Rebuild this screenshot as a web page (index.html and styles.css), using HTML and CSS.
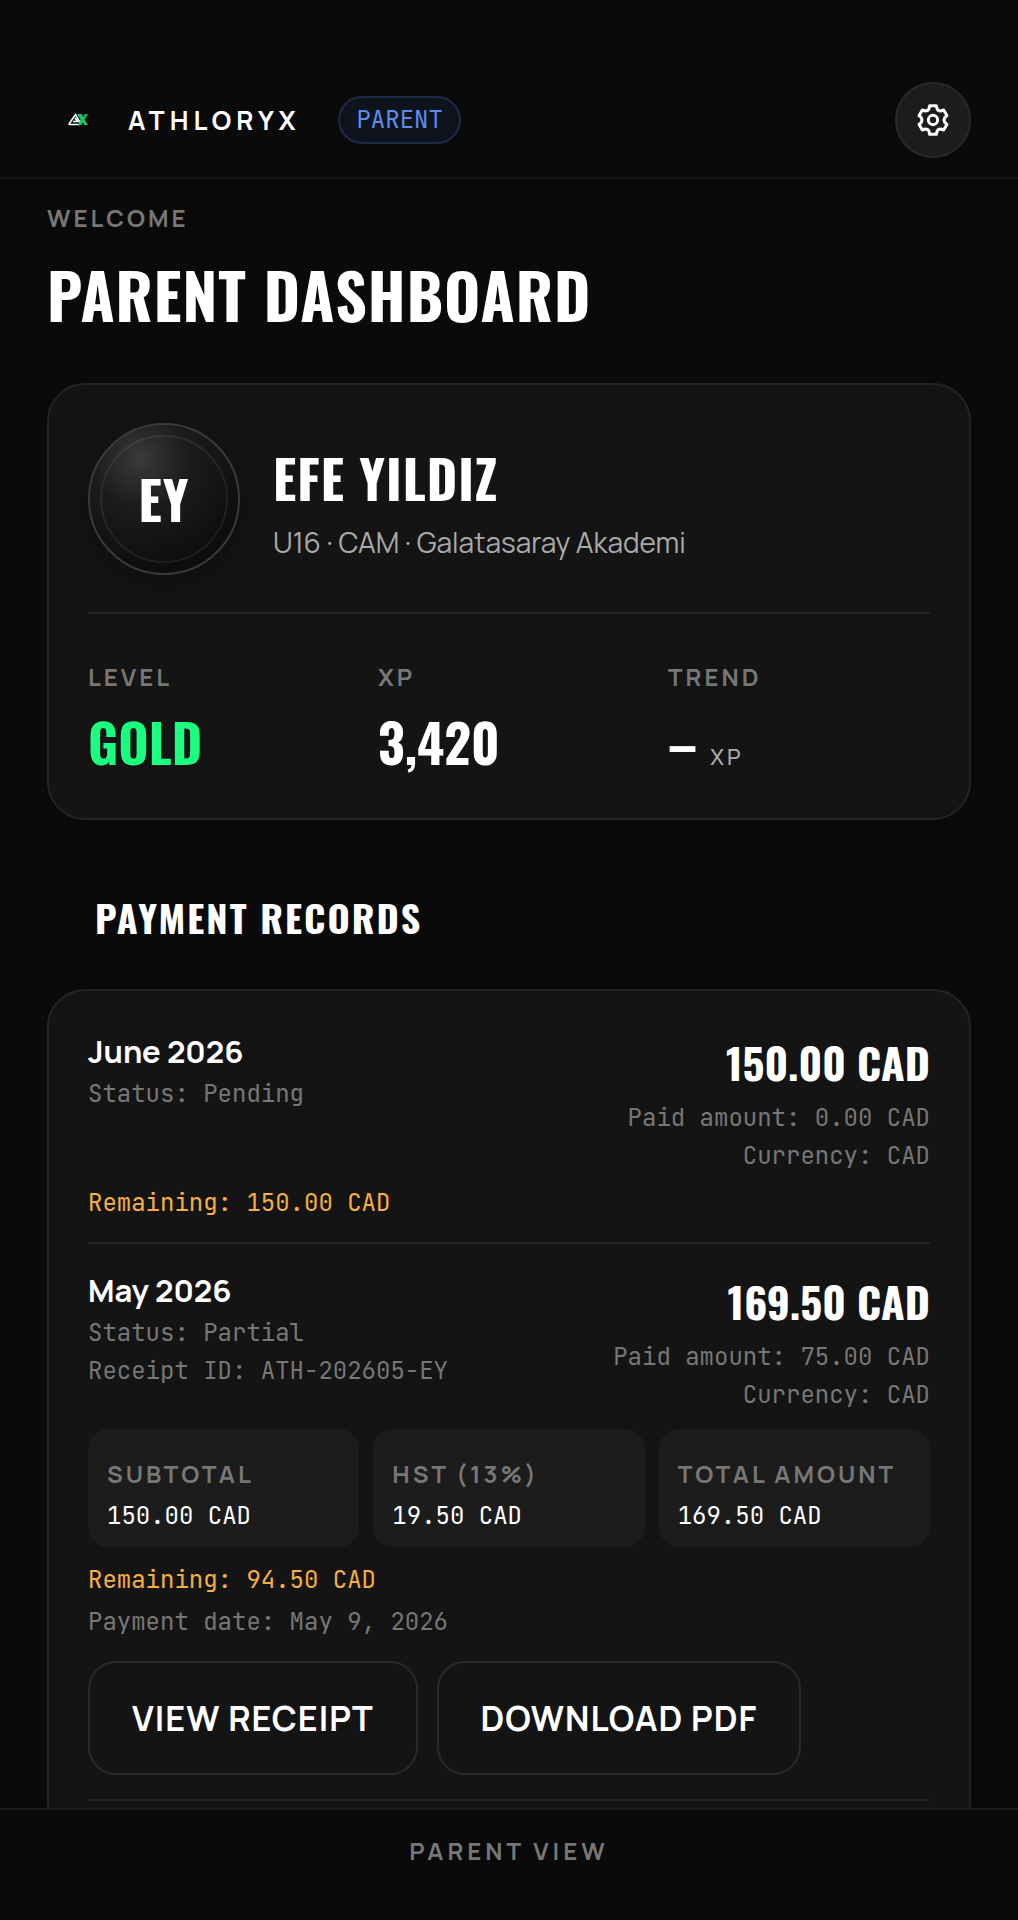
FILE: index.html
```html
<!DOCTYPE html>
<html lang="en">
  <head>
    <meta charset="UTF-8">
    <meta name="viewport" content="width=device-width, initial-scale=1">
    <title>Athloryx - Parent Dashboard</title>
    <link rel="stylesheet" href="styles.css">
  </head>
  <body>
    <header class="topbar">
      <div class="brand">
        <svg class="logo" viewBox="0 0 60 60" aria-hidden="true">
          <path d="M21.500 34.500h11.500M22 34L28.500 24.500l5 9M26 31.500h4.500L28 28" fill="none" stroke="#fff" stroke-width="1.600"/>
          <path d="M30 24h4.500l2 3 1.500-3h3l-3.500 5.500 3.500 5.500h-3.500l-2-2.500-1 2.500H31l2.500-5.500z" fill="#17c964"/>
        </svg>
        <span class="brand-name">ATHLORYX</span>
      </div>
      <span class="role">PARENT</span>
      <button class="settings" type="button" aria-label="Settings">
        <svg viewBox="-60 -60 120 120" aria-hidden="true">
          <path d="M-10-43H10L12-34Q15-27 23-27L32-30 42-13 35-7Q31 0 35 7L42 13 32 30 23 27Q15 27 12 34L10 43H-10L-12 34Q-15 27-23 27L-32 30-42 13-35 7Q-31 0-35-7L-42-13-32-30-23-27Q-15-27-12-34Z"/>
          <circle r="14"/>
        </svg>
      </button>
    </header>

    <main class="content">
      <p class="label">WELCOME</p>
      <h1>PARENT DASHBOARD</h1>

      <section class="card">
        <div class="athlete">
          <div class="avatar">EY</div>
          <div>
            <h2 class="athlete-name">EFE YILDIZ</h2>
            <p class="athlete-info">U16 · CAM · Galatasaray Akademi</p>
          </div>
        </div>
        <div class="stats">
          <div>
            <p class="label">LEVEL</p>
            <p class="stat-value gold">GOLD</p>
          </div>
          <div>
            <p class="label">XP</p>
            <p class="stat-value">3,420</p>
          </div>
          <div>
            <p class="label">TREND</p>
            <p class="stat-value">– <span class="unit">XP</span></p>
          </div>
        </div>
      </section>

      <h2 class="section-title">PAYMENT RECORDS</h2>

      <section class="card">
        <article class="record">
          <div class="record-head">
            <div>
              <h3 class="month">June 2026</h3>
              <p class="meta">Status: Pending</p>
            </div>
            <div class="record-right">
              <p class="amount">150.00 CAD</p>
              <p class="meta">Paid amount: 0.00 CAD</p>
              <p class="meta">Currency: CAD</p>
            </div>
          </div>
          <p class="meta remaining">Remaining: 150.00 CAD</p>
        </article>

        <article class="record">
          <div class="record-head">
            <div>
              <h3 class="month">May 2026</h3>
              <p class="meta">Status: Partial</p>
              <p class="meta">Receipt ID: ATH-202605-EY</p>
            </div>
            <div class="record-right">
              <p class="amount">169.50 CAD</p>
              <p class="meta">Paid amount: 75.00 CAD</p>
              <p class="meta">Currency: CAD</p>
            </div>
          </div>
          <div class="totals">
            <div class="total">
              <p class="label">SUBTOTAL</p>
              <p class="meta">150.00 CAD</p>
            </div>
            <div class="total">
              <p class="label">HST (13%)</p>
              <p class="meta">19.50 CAD</p>
            </div>
            <div class="total">
              <p class="label">TOTAL AMOUNT</p>
              <p class="meta">169.50 CAD</p>
            </div>
          </div>
          <p class="meta remaining">Remaining: 94.50 CAD</p>
          <p class="meta paid-on">Payment date: May 9, 2026</p>
          <div class="actions">
            <button type="button" class="btn">VIEW RECEIPT</button>
            <button type="button" class="btn">DOWNLOAD PDF</button>
          </div>
        </article>
      </section>
    </main>

    <footer class="bottombar">
      <p class="label">PARENT VIEW</p>
    </footer>
  </body>
</html>
```

FILE: styles.css
```css
* {
  box-sizing: border-box;
}

body {
  margin: 0;
  height: 100vh;
  display: flex;
  flex-direction: column;
  background: #0a0a0a;
  color: #fff;
  font-family: Manrope, Inter, sans-serif;
}

h1, h2, h3, p {
  margin: 0;
}

h1, .athlete-name, .avatar, .stat-value, .section-title, .amount {
  font-family: Oswald, 'Liberation Sans Narrow', 'DejaVu Sans Condensed', sans-serif;
  font-weight: 700;
}

h1, .athlete-name, .avatar {
  letter-spacing: 1px;
}

/* top bar */
.topbar {
  display: flex;
  align-items: center;
  padding: 82px 47px 19px;
  border-bottom: 2px solid #161616;
}

.brand {
  display: flex;
  align-items: center;
  gap: 21px;
}

.logo {
  width: 60px;
  height: 60px;
}

.brand-name {
  font-size: 26px;
  font-weight: 700;
  letter-spacing: 5px;
}

.role {
  margin-left: 38px;
  padding: 0 16px;
  border: 2px solid #1f2a44;
  border-radius: 24px;
  background: #0f131c;
  color: #5b8def;
  font: 24px/44px 'JetBrains Mono', 'DejaVu Sans Mono', monospace;
}

.settings {
  display: flex;
  align-items: center;
  justify-content: center;
  width: 76px;
  height: 76px;
  margin-left: auto;
  padding: 0;
  border: 2px solid #2a2a2a;
  border-radius: 50%;
  background: #1c1c1c;
  cursor: pointer;
}

.settings svg {
  width: 40px;
  height: 40px;
  fill: none;
  stroke: #fff;
  stroke-width: 9;
  stroke-linejoin: round;
}

/* page */
.content {
  flex: 1;
  min-height: 0;
  padding: 20px 47px 0;
  overflow: hidden;
}

.label {
  color: #777;
  font-size: 24px;
  font-weight: 700;
  line-height: 38px;
  letter-spacing: 3px;
}

h1 {
  margin: 18px 0 50px;
  font-size: 62px;
  line-height: 78px;
}

.card {
  padding: 38px 39px;
  border: 2px solid #242424;
  border-radius: 38px;
  background: #141414;
}

/* athlete */
.athlete {
  display: flex;
  align-items: center;
  gap: 33px;
  padding-bottom: 37px;
  border-bottom: 2px solid #242424;
}

.avatar {
  position: relative;
  width: 152px;
  height: 152px;
  border: 2px solid #3a3a3a;
  border-radius: 50%;
  background: radial-gradient(circle at 34% 23%, #3a3a3a 0, #1c1c1c 32%, #0d0d0d 75%);
  box-shadow: 0 10px 32px rgba(0, 0, 0, 0.25);
  font-size: 52px;
  line-height: 148px;
  text-align: center;
}

.avatar::after {
  content: "";
  position: absolute;
  inset: 10px;
  border: 2px solid rgba(255, 255, 255, 0.07);
  border-radius: 50%;
}

.athlete-name {
  font-size: 52px;
  line-height: 78px;
}

.athlete-info {
  margin-top: 8px;
  color: #aaa;
  font-size: 28px;
  line-height: 34px;
}

.stats {
  display: grid;
  grid-template-columns: repeat(3, 1fr);
  gap: 28px;
  padding: 44px 0 2px;
}

.stat-value {
  margin-top: 10px;
  font-size: 52px;
  line-height: 72px;
}

.gold {
  color: #1aff80;
}

.unit {
  color: #aaa;
  font-family: Manrope, Inter, sans-serif;
  font-size: 22px;
  font-weight: 500;
  line-height: 1;
  letter-spacing: 3px;
}

/* payments */
.section-title {
  margin: 72px 48px 47px;
  font-size: 38px;
  line-height: 50px;
  letter-spacing: 2px;
}

.record {
  padding-bottom: 20px;
  border-bottom: 2px solid #242424;
}

.record + .record {
  padding-top: 24px;
}

.record-head {
  display: flex;
  justify-content: space-between;
}

.record-right {
  text-align: right;
}

.month {
  margin-bottom: 2px;
  font-size: 31px;
  font-weight: 700;
  line-height: 44px;
}

.amount {
  margin-bottom: 4px;
  font-size: 43px;
  line-height: 66px;
}

.meta {
  color: #777;
  font-family: 'JetBrains Mono', 'DejaVu Sans Mono', monospace;
  font-size: 24px;
  line-height: 38px;
}

.remaining {
  margin-top: 9px;
  color: #f5b041;
}

.paid-on {
  margin-top: 4px;
}

.totals {
  display: grid;
  grid-template-columns: repeat(3, 1fr);
  gap: 14px;
  margin: 15px 0 14px;
}

.total {
  padding: 26px 19px 12px;
  border-radius: 20px;
  background: #1c1c1c;
}

.total .meta {
  margin-top: 4px;
  color: #fff;
}

.actions {
  display: flex;
  gap: 19px;
  margin: 20px 0 24px;
}

.record:last-child {
  padding-bottom: 0;
}

.btn {
  padding: 0 42px;
  border: 2px solid #2a2a2a;
  border-radius: 28px;
  background: none;
  color: #fff;
  font: 700 34px/110px Manrope, Inter, sans-serif;
  letter-spacing: 1px;
  cursor: pointer;
}

/* bottom bar */
.bottombar {
  padding: 22px 48px 50px;
  border-top: 2px solid #1c1c1c;
  text-align: center;
}

.bottombar .label {
  letter-spacing: 4px;
}
```
